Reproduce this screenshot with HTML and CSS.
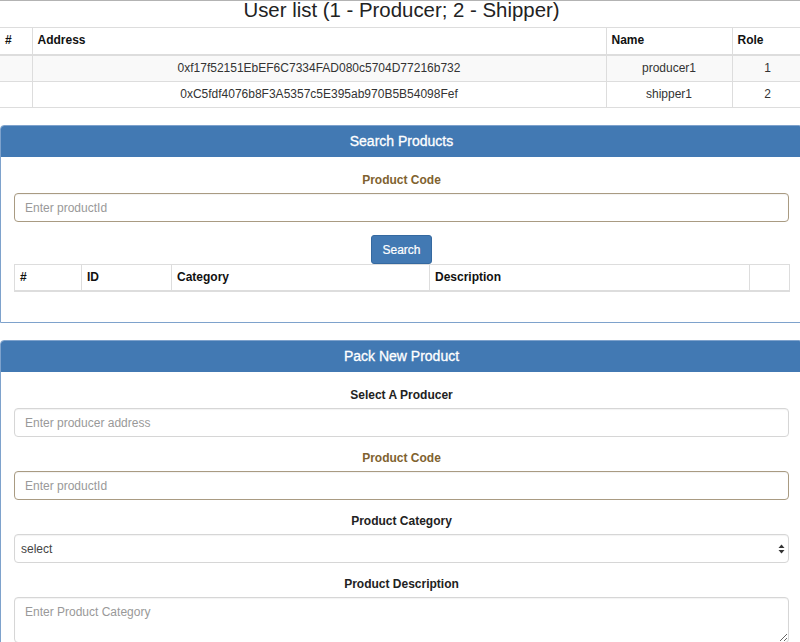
FILE: index.html
```html
<!DOCTYPE html>
<html lang="en">
<head>
<meta charset="utf-8">
<title>Supply chain</title>
<link rel="stylesheet" href="styles.css">
</head>
<body>
<h3 class="title">User list (1 - Producer; 2 - Shipper)</h3>
<table class="grid users">
  <colgroup><col class="c-num"><col class="c-addr"><col class="c-name"><col class="c-role"></colgroup>
  <thead>
    <tr><th>#</th><th>Address</th><th>Name</th><th>Role</th></tr>
  </thead>
  <tbody>
    <tr class="odd"><td></td><td>0xf17f52151EbEF6C7334FAD080c5704D77216b732</td><td>producer1</td><td>1</td></tr>
    <tr><td></td><td>0xC5fdf4076b8F3A5357c5E395ab970B5B54098Fef</td><td>shipper1</td><td>2</td></tr>
  </tbody>
</table>

<section class="panel">
  <div class="panel-heading">Search Products</div>
  <div class="panel-body">
    <div class="form-group warn">
      <label>Product Code</label>
      <input type="text" class="control" placeholder="Enter productId">
    </div>
    <div class="actions"><button class="btn">Search</button></div>
    <table class="grid products">
      <colgroup><col class="p-num"><col class="p-id"><col class="p-cat"><col class="p-desc"><col class="p-act"></colgroup>
      <thead>
        <tr><th>#</th><th>ID</th><th>Category</th><th>Description</th><th></th></tr>
      </thead>
    </table>
  </div>
</section>

<section class="panel">
  <div class="panel-heading">Pack New Product</div>
  <div class="panel-body">
    <div class="form-group">
      <label>Select A Producer</label>
      <input type="text" class="control" placeholder="Enter producer address">
    </div>
    <div class="form-group warn">
      <label>Product Code</label>
      <input type="text" class="control" placeholder="Enter productId">
    </div>
    <div class="form-group">
      <label>Product Category</label>
      <div class="select-wrap">
        <select class="control select"><option>select</option></select>
        <svg class="select-arrows" width="7" height="10" viewBox="0 0 7 10" aria-hidden="true">
          <path d="M3.5 0.5 L6.5 4 L0.5 4 Z" fill="#333"/>
          <path d="M0.5 6 L6.5 6 L3.5 9.5 Z" fill="#333"/>
        </svg>
      </div>
    </div>
    <div class="form-group">
      <label>Product Description</label>
      <textarea class="control area" placeholder="Enter Product Category"></textarea>
    </div>
  </div>
</section>
</body>
</html>
```

FILE: styles.css
```css
html, body {
  overflow: hidden;
}
body {
  margin: 0;
  border-top: 1px solid #b3b3b3;
  font-family: "Liberation Sans", Arial, Helvetica, sans-serif;
  font-size: 12px;
  color: #333;
  background: #fff;
  width: 803px;
}
.title {
  margin: 0 0 8px;
  height: 18px;
  line-height: 18px;
  font-size: 20.4px;
  font-weight: normal;
  text-align: center;
  color: #222;
}

.grid {
  border-collapse: collapse;
  border-spacing: 0;
  table-layout: fixed;
}
.grid th, .grid td {
  border: 1px solid #ddd;
  padding: 4px 5px 4px;
  line-height: 17px;
  height: 17px;
}
.grid th {
  text-align: left;
  font-weight: bold;
  color: #111;
  border-bottom-width: 2px;
}
.users th {
  padding-bottom: 5px;
}
.grid td {
  text-align: center;
  color: #333;
}
.grid tr.odd td {
  background: #f9f9f9;
}
.users {
  width: 803px;
  border-left: 0;
}
.users th:first-child, .users td:first-child {
  border-left: 0;
}
.c-num { width: 32px; }
.c-addr { width: 574px; }
.c-name { width: 126px; }
.c-role { width: 71px; }

.panel {
  margin-top: 17px;
  border: 1px solid #7ea2cc;
  border-radius: 4px 4px 0 0;
  width: 801px;
}
.panel + .panel {
  margin-top: 17px;
}
.panel-heading {
  height: 31px;
  line-height: 31px;
  background: #4279b3;
  color: #fff;
  text-align: center;
  font-size: 14px;
  -webkit-text-stroke: 0.3px #fff;
  border-radius: 3px 3px 0 0;
}
.panel-body {
  padding: 15px 13px 13px;
}
.form-group {
  margin-bottom: 13px;
}
.form-group label {
  display: block;
  text-align: center;
  font-weight: bold;
  line-height: 17px;
  margin-bottom: 4px;
  color: #222;
}
.form-group.warn label {
  color: #80622f;
}
.control {
  display: block;
  box-sizing: border-box;
  width: 775px;
  height: 29px;
  margin: 0;
  padding: 0 10px;
  border: 1px solid #d6d6d6;
  border-radius: 4px;
  background: #fff;
  font-family: inherit;
  font-size: 12px;
  color: #555;
  box-shadow: inset 0 1px 1px rgba(0,0,0,0.05);
}
.control::placeholder {
  color: #999;
}
.warn .control {
  border-color: #a99b82;
}
.select-wrap {
  position: relative;
  width: 775px;
}
.select {
  -webkit-appearance: none;
  appearance: none;
  padding-left: 6px;
  color: #444;
}
.select-arrows {
  position: absolute;
  right: 4px;
  top: 10px;
}
.area {
  height: 46px;
  padding: 7px 10px;
  resize: vertical;
}

.actions {
  text-align: center;
  height: 29px;
}
.btn {
  height: 29px;
  padding: 0 10px;
  border: 1px solid #3569a0;
  border-radius: 3px;
  background: #4279b3;
  color: #fff;
  font-family: inherit;
  font-size: 12px;
  -webkit-text-stroke: 0.2px #fff;
  cursor: pointer;
}
.products {
  width: 775px;
  margin-bottom: 17px;
}
.p-num { width: 67px; }
.p-id { width: 90px; }
.p-cat { width: 258px; }
.p-desc { width: 320px; }
.p-act { width: 40px; }
```
